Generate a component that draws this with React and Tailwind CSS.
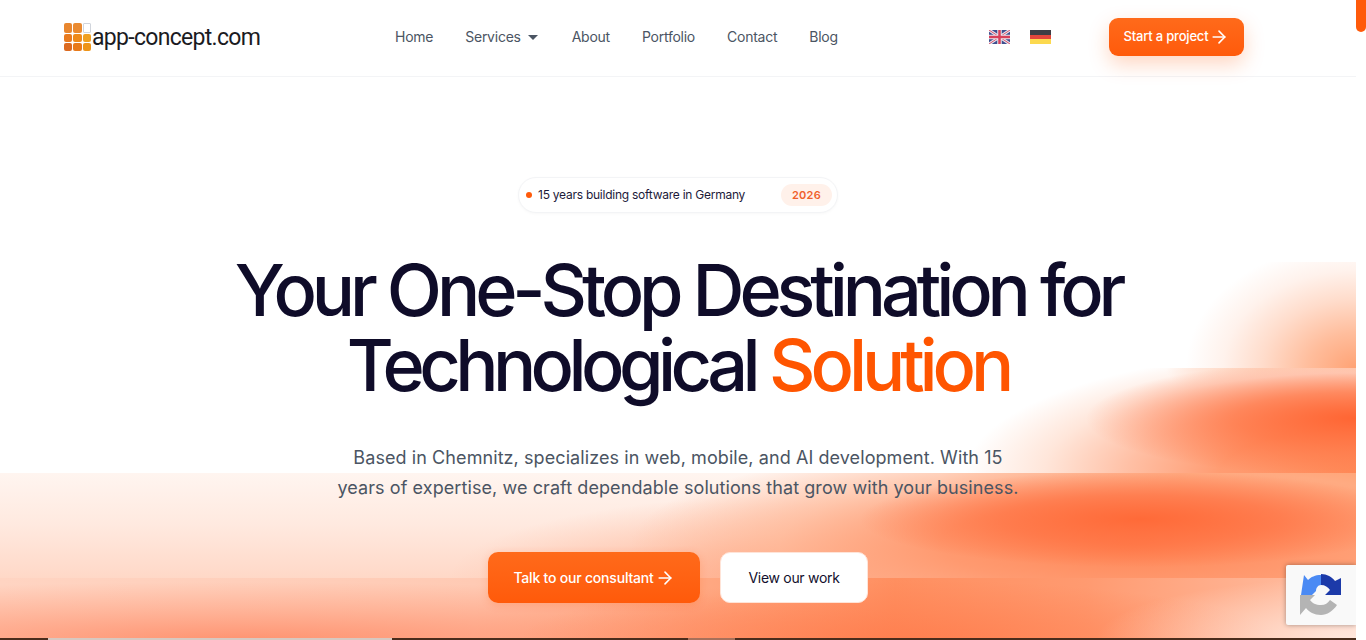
import { ArrowRight } from 'lucide-react';

const navLinks = ['Home', 'Services', 'About', 'Portfolio', 'Contact', 'Blog'];

function Logo() {
    const cells = [
        '#e8862e', '#ea8a30', null,
        '#e87a1e', '#ee8a1a', '#f0a020',
        '#dc6a20', '#e87a1a', '#ee9418',
    ];
    return (
        <div className="grid grid-cols-3 gap-px w-[27px] h-[28px]">
            {cells.map((c, i) =>
                c ? (
                    <span key={i} className="rounded-[2px]" style={{ backgroundColor: c }} />
                ) : (
                    <span key={i} className="rounded-[1px] border border-gray-300 bg-white" />
                )
            )}
        </div>
    );
}

function UkFlag() {
    return (
        <svg width="21" height="14" viewBox="0 0 21 14" className="block">
            <rect width="21" height="14" fill="#3f4f8f" />
            <path d="M0 0L21 14M21 0L0 14" stroke="#e8e8f0" strokeWidth="3" />
            <path d="M0 0L21 14M21 0L0 14" stroke="#d8506a" strokeWidth="1" />
            <path d="M10.5 0V14M0 7H21" stroke="#e8e8f0" strokeWidth="4.5" />
            <path d="M10.5 0V14M0 7H21" stroke="#d8405a" strokeWidth="2.5" />
        </svg>
    );
}

function DeFlag() {
    return (
        <div className="flex flex-col w-[21px] h-[14px]">
            <span className="flex-1 bg-[#3d3d45]" />
            <span className="flex-1 bg-[#e2463c]" />
            <span className="flex-1 bg-[#fcd94e]" />
        </div>
    );
}

function Recaptcha() {
    return (
        <div className="absolute right-0 bottom-[15px] w-[70px] h-[60px] bg-[#f9f9f9] rounded-l-[2px] shadow-[0_0_5px_rgba(0,0,0,0.35)] flex items-center pl-[14px] z-20">
            <svg width="41" height="42" viewBox="0 0 41 42">
                <path d="M21 1C15 1 11 3 8 6L4 1L1 21H12L16 17C16 14 18 11 21 11Z" fill="#4a8af4" />
                <path d="M21 0C27 0 32 3 35 7L41 4V21H25L30 16C28 13 25 11 21 11Z" fill="#1c3aa9" />
                <path d="M0 21H15L10 26C12 29 16 31 21 31C25 31 28 29 30 26L37 31C33 37 27 41 21 41C14 41 9 38 6 34L0 41Z" fill="#b4b4b4" />
            </svg>
        </div>
    );
}

// blurred orange tiles behind the hero, each band has a hard top edge
function HeroBackdrop() {
    return (
        <div className="absolute inset-x-0 top-[262px] bottom-0 overflow-hidden">
            <div className="h-[106px] bg-[radial-gradient(ellipse_170px_125px_at_100%_100%,#ffa274_0%,#ffbd9c_28%,#ffdccb_55%,#fff2ec_78%,rgba(255,255,255,0)_100%)]" />
            <div className="h-[105px] bg-[radial-gradient(ellipse_270px_58px_at_100%_48%,#ff6533_0%,rgba(255,110,60,0.7)_45%,rgba(255,140,90,0)_100%),radial-gradient(ellipse_390px_125px_at_100%_100%,#ff8a58_0%,#ff9c72_35%,#ffbfa4_58%,#ffe6da_80%,rgba(255,255,255,0)_100%),radial-gradient(ellipse_190px_50px_at_100%_0%,#ff9a60_0%,#ffb690_50%,rgba(255,255,255,0)_100%)]" />
            <div className="h-[105px] bg-[radial-gradient(ellipse_280px_48px_at_1140px_44%,#ff6a38_0%,rgba(255,110,62,0.65)_50%,rgba(255,130,80,0)_100%),radial-gradient(ellipse_500px_110px_at_1130px_68%,#ff8656_0%,#ff9a70_38%,rgba(255,180,145,0.65)_70%,rgba(255,220,205,0)_100%),radial-gradient(ellipse_380px_85px_at_830px_100%,rgba(255,150,110,0.85)_0%,rgba(255,170,135,0.4)_55%,rgba(255,190,160,0)_100%),linear-gradient(to_right,rgba(255,170,120,0)_940px,#ff9a66_1180px),linear-gradient(to_bottom,#fff5f0_0%,#ffe9df_50%,#ffd8c7_100%)]" />
            <div className="h-[62px] bg-[radial-gradient(ellipse_260px_62px_at_100%_100%,rgba(255,238,230,0.85)_0%,rgba(255,235,225,0)_100%),radial-gradient(ellipse_380px_60px_at_900px_100%,rgba(255,124,76,0.8)_0%,rgba(255,124,76,0)_100%),radial-gradient(ellipse_760px_58px_at_240px_100%,rgba(255,125,85,0.72)_0%,rgba(255,135,95,0.35)_55%,rgba(255,140,100,0)_100%),linear-gradient(to_right,#ffd4c2_0%,#ffcab4_35%,#ffa882_52%,#ff8f60_66%,#ff9a70_80%,#ffb89a_95%,#ffc8b4_100%)]" />
        </div>
    );
}

export default function App() {
    return (
        <div className="h-[640px] overflow-hidden bg-white flex font-['Inter',sans-serif]">
            <div className="relative flex-1 min-w-0 overflow-hidden">
                <HeroBackdrop />

                <header className="relative z-10 h-[77px] border-b border-gray-100 bg-white flex items-center pl-[64px] pr-[112px] pb-[2px]">
                    <div className="flex items-center gap-px w-[331px]">
                        <Logo />
                        <span className="font-['Roboto',sans-serif] text-[23px] tracking-[-0.7px] text-[#1b1b1f] leading-none mt-[1px]">app-concept.com</span>
                    </div>
                    <nav className="flex items-center gap-8 text-[14px] tracking-[-0.25px] text-[#4b5563] -mt-[2px]">
                        {navLinks.map((link) => (
                            <a key={link} className="flex items-center gap-[7px]">
                                {link}
                                {link === 'Services' && <span className="border-x-[5px] border-x-transparent border-t-[5px] border-t-[#4b5563] mt-[2px] mr-[2px]" />}
                            </a>
                        ))}
                    </nav>
                    <div className="flex items-center gap-5 ml-auto mr-[58px]">
                        <UkFlag />
                        <DeFlag />
                    </div>
                    <button className="h-[38px] w-[135px] rounded-[9px] bg-gradient-to-b from-[#ff6a1a] to-[#ff5a0a] text-white text-[13px] tracking-[-0.2px] font-medium flex items-center justify-center shadow-[0_8px_20px_rgba(255,90,10,0.25)]">
                        Start a project
                        <ArrowRight className="w-[20px] h-[20px] ml-[1px]" strokeWidth={1.9} />
                    </button>
                </header>

                <main className="relative z-10 flex flex-col items-center pt-[100px]">
                    <div className="h-[36px] w-[320px] rounded-full border border-gray-100 bg-white flex items-center pl-[6px] pr-[5px] shadow-[0_1px_3px_rgba(0,0,0,0.03)]">
                        <span className="w-[6px] h-[6px] rounded-full bg-[#ff5a0a] ml-[1px] mr-[6px]" />
                        <span className="text-[12px] tracking-[-0.25px] text-[#1c1a3a]">15 years building software in Germany</span>
                        <span className="ml-auto h-[22px] w-[51px] rounded-full bg-[#fff1ea] text-[#f0602a] text-[11px] font-semibold tracking-wide flex items-center justify-center">2026</span>
                    </div>

                    <h1 className="mt-[39px] text-center text-[72px] leading-[75px] font-medium tracking-[-5.1px] text-[#0f0c29]">
                        Your One-Stop Destination for
                        <br />
                        <span className="tracking-[-5.6px]">Technological</span> <span className="text-[#ff5500]">Solution</span>
                    </h1>

                    <p className="mt-[41px] text-center text-[18px] leading-[30px] tracking-[0.08px] text-[#4b5563] w-[700px]">
                        Based in Chemnitz, specializes in web, mobile, and AI development. With 15
                        <br />
                        years of expertise, we craft dependable solutions that grow with your business.
                    </p>

                    <div className="mt-[49px] flex gap-5 text-[14px]">
                        <button className="h-[51px] w-[212px] rounded-[10px] bg-gradient-to-b from-[#ff6a1a] to-[#ff5a0a] text-white font-medium tracking-[-0.2px] flex items-center justify-center shadow-[0_2px_8px_rgba(255,90,10,0.2)]">
                            Talk to our consultant
                            <ArrowRight className="w-[20px] h-[20px] ml-[1px]" strokeWidth={1.9} />
                        </button>
                        <button className="h-[51px] w-[148px] rounded-[10px] bg-white text-[#120f2d] tracking-[-0.3px] border border-[#ffe4d8]">View our work</button>
                    </div>
                </main>

                <div className="absolute bottom-0 inset-x-0 h-[2px] z-10 flex">
                    <span className="w-[48px] bg-[#4a2c1c]" />
                    <span className="w-[344px] bg-[#d8c8c0]" />
                    <span className="w-[296px] bg-[#4a2c1c]" />
                    <span className="w-[47px] bg-[#a8705a]" />
                    <span className="flex-1 bg-[#4a2c1c]" />
                </div>

                <Recaptcha />
            </div>

            {/* scrollbar */}
            <div className="w-[10px] bg-white shrink-0">
                <div className="h-[32px] bg-[#ff5a0a] rounded-b-[5px]" />
            </div>
        </div>
    );
}
